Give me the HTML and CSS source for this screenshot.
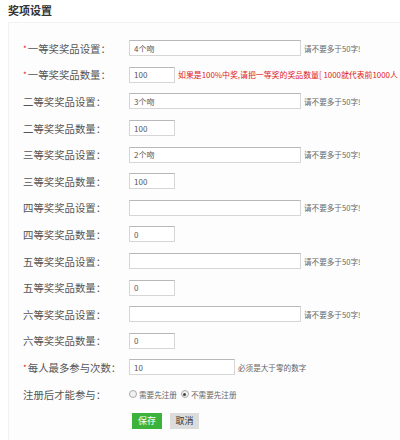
FILE: index.html
```html
<!DOCTYPE html>
<html lang="zh-CN">
<head>
<meta charset="utf-8">
<title>奖项设置</title>
<link rel="stylesheet" href="styles.css">
</head>
<body>
<h2 class="title">奖项设置</h2>
<div class="panel">
  <form class="form">
    <div class="row"><label class="lbl"><span class="req">*</span>一等奖奖品设置：</label><input class="ipt long" value="4个吻"><span class="hint">请不要多于50字!</span></div>
    <div class="row"><label class="lbl"><span class="req">*</span>一等奖奖品数量：</label><input class="ipt short" value="100"><span class="warn">如果是100%中奖,请把一等奖的奖品数量[ 1000就代表前1000人</span></div>
    <div class="row"><label class="lbl">二等奖奖品设置：</label><input class="ipt long" value="3个吻"><span class="hint">请不要多于50字!</span></div>
    <div class="row"><label class="lbl">二等奖奖品数量：</label><input class="ipt short" value="100"></div>
    <div class="row"><label class="lbl">三等奖奖品设置：</label><input class="ipt long" value="2个吻"><span class="hint">请不要多于50字!</span></div>
    <div class="row"><label class="lbl">三等奖奖品数量：</label><input class="ipt short" value="100"></div>
    <div class="row"><label class="lbl">四等奖奖品设置：</label><input class="ipt long" value=""><span class="hint">请不要多于50字!</span></div>
    <div class="row"><label class="lbl">四等奖奖品数量：</label><input class="ipt short" value="0"></div>
    <div class="row"><label class="lbl">五等奖奖品设置：</label><input class="ipt long" value=""><span class="hint">请不要多于50字!</span></div>
    <div class="row"><label class="lbl">五等奖奖品数量：</label><input class="ipt short" value="0"></div>
    <div class="row"><label class="lbl">六等奖奖品设置：</label><input class="ipt long" value=""><span class="hint">请不要多于50字!</span></div>
    <div class="row"><label class="lbl">六等奖奖品数量：</label><input class="ipt short" value="0"></div>
    <div class="row"><label class="lbl"><span class="req">*</span>每人最多参与次数：</label><input class="ipt mid" value="10"><span class="hint">必须是大于零的数字</span></div>
    <div class="row"><label class="lbl">注册后才能参与：</label>
      <span class="radios">
        <span class="radio"><span class="dot"></span>需要先注册</span>
        <span class="radio"><span class="dot on"></span>不需要先注册</span>
      </span>
    </div>
    <div class="row btns"><span class="lbl"></span><button type="button" class="btn save">保存</button><button type="button" class="btn cancel">取消</button></div>
  </form>
</div>
</body>
</html>
```
FILE: styles.css
```css
html, body {
  margin: 0;
  padding: 0;
  background: #fff;
  overflow: hidden;
}
body {
  font-family: "Noto Sans CJK SC", "Noto Sans", sans-serif;
  color: #555;
  width: 400px;
  height: 440px;
}
.title {
  margin: 0;
  padding: 2px 0 0 8px;
  height: 20px;
  font-size: 11px;
  line-height: 16px;
  font-weight: bold;
  color: #333;
}
.panel {
  margin-left: 8px;
  border: 1px solid #f1f1f1;
  border-right: none;
  background: #fdfdfd;
  padding: 12px 0 10px 14px;
  height: 420px;
  box-sizing: border-box;
  overflow: hidden;
}
.form {
  display: grid;
  grid-auto-rows: 26.6px;
}
.row {
  display: flex;
  align-items: center;
  white-space: nowrap;
}
.lbl {
  width: 106px;
  flex: none;
  font-size: 10.4px;
  color: #555;
  letter-spacing: 0;
}
.req {
  color: #e02020;
  font-size: 8px;
  margin-right: 1px;
  vertical-align: 1px;
}
.ipt {
  box-sizing: border-box;
  height: 16px;
  border: 1px solid #d6d6d6;
  border-top-color: #b8b8b8;
  background: #fff;
  padding: 0 4px;
  font-family: inherit;
  font-size: 8px;
  color: #555;
  margin: 0;
  outline: none;
}
.long { width: 172px; }
.short { width: 46px; }
.mid { width: 106px; }
.hint {
  font-size: 7.6px;
  color: #666;
  margin-left: 3px;
}
.warn {
  font-size: 7.9px;
  color: #e02020;
  margin-left: 3px;
}
.radios {
  display: flex;
  align-items: center;
  gap: 4px;
  font-size: 7.6px;
  color: #666;
}
.radio {
  display: flex;
  align-items: center;
  gap: 2px;
}
.dot {
  width: 6px;
  height: 6px;
  border-radius: 50%;
  border: 1px solid #aaa;
  background: #f2f2f2;
  display: inline-block;
  position: relative;
}
.dot.on::after {
  content: "";
  position: absolute;
  left: 1.5px;
  top: 1.5px;
  width: 3px;
  height: 3px;
  border-radius: 50%;
  background: #444;
}
.btns { gap: 0; }
.btn {
  height: 16px;
  border: none;
  padding: 0;
  font-family: inherit;
  font-size: 9px;
  cursor: pointer;
  margin: 0;
}
.save {
  width: 30px;
  margin-left: 3px;
  background: #3bb33b;
  color: #fff;
}
.cancel {
  width: 29px;
  margin-left: 8px;
  background: #dcdcdc;
  color: #333;
}
```
